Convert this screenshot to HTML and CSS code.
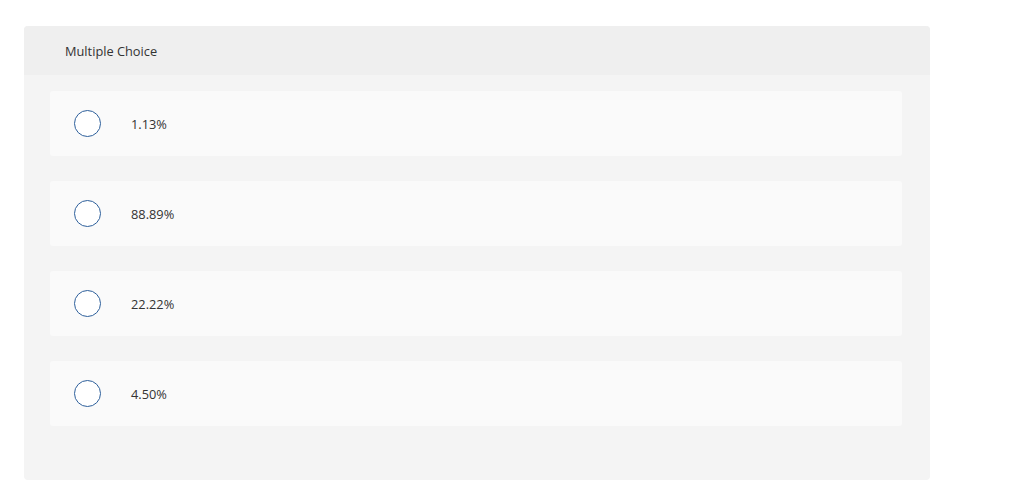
FILE: index.html
```html
<!DOCTYPE html>
<html lang="en">
<head>
    <meta charset="UTF-8">
    <meta name="viewport" content="width=device-width, initial-scale=1.0">
    <title>Multiple Choice</title>
    <link rel="stylesheet" href="styles.css">
</head>
<body>
    <div class="question">
        <div class="question-header">Multiple Choice</div>
        <div class="choices">
            <label class="choice">
                <span class="radio"></span>
                <span class="choice-text">1.13%</span>
            </label>
            <label class="choice">
                <span class="radio"></span>
                <span class="choice-text">88.89%</span>
            </label>
            <label class="choice">
                <span class="radio"></span>
                <span class="choice-text">22.22%</span>
            </label>
            <label class="choice">
                <span class="radio"></span>
                <span class="choice-text">4.50%</span>
            </label>
        </div>
    </div>
</body>
</html>
```

FILE: styles.css
```css
body {
    margin: 0;
    padding: 26px 94px 0 24px;
    font-family: 'Open Sans', 'Liberation Sans', sans-serif;
    color: #333;
    background: #fff;
}
.question {
    background: #f4f4f4;
    border-radius: 4px;
    overflow: hidden;
    height: 454px;
}
.question-header {
    background: #efefef;
    height: 49px;
    padding: 1px 0 0 41px;
    box-sizing: border-box;
    display: flex;
    align-items: center;
    font-size: 12.8px;
}
.choices {
    display: flex;
    flex-direction: column;
    gap: 25px;
    padding: 16px 28px 0 26px;
}
.choice {
    background: #fafafa;
    border-radius: 3px;
    height: 65px;
    display: flex;
    align-items: center;
    padding-left: 24px;
    cursor: pointer;
}
.radio {
    width: 25px;
    height: 25px;
    border: 1.5px solid #2d5f9b;
    border-radius: 50%;
    background: #fff;
    flex-shrink: 0;
}
.choice-text {
    margin-left: 30px;
    font-size: 12.8px;
    color: #333;
}
```
